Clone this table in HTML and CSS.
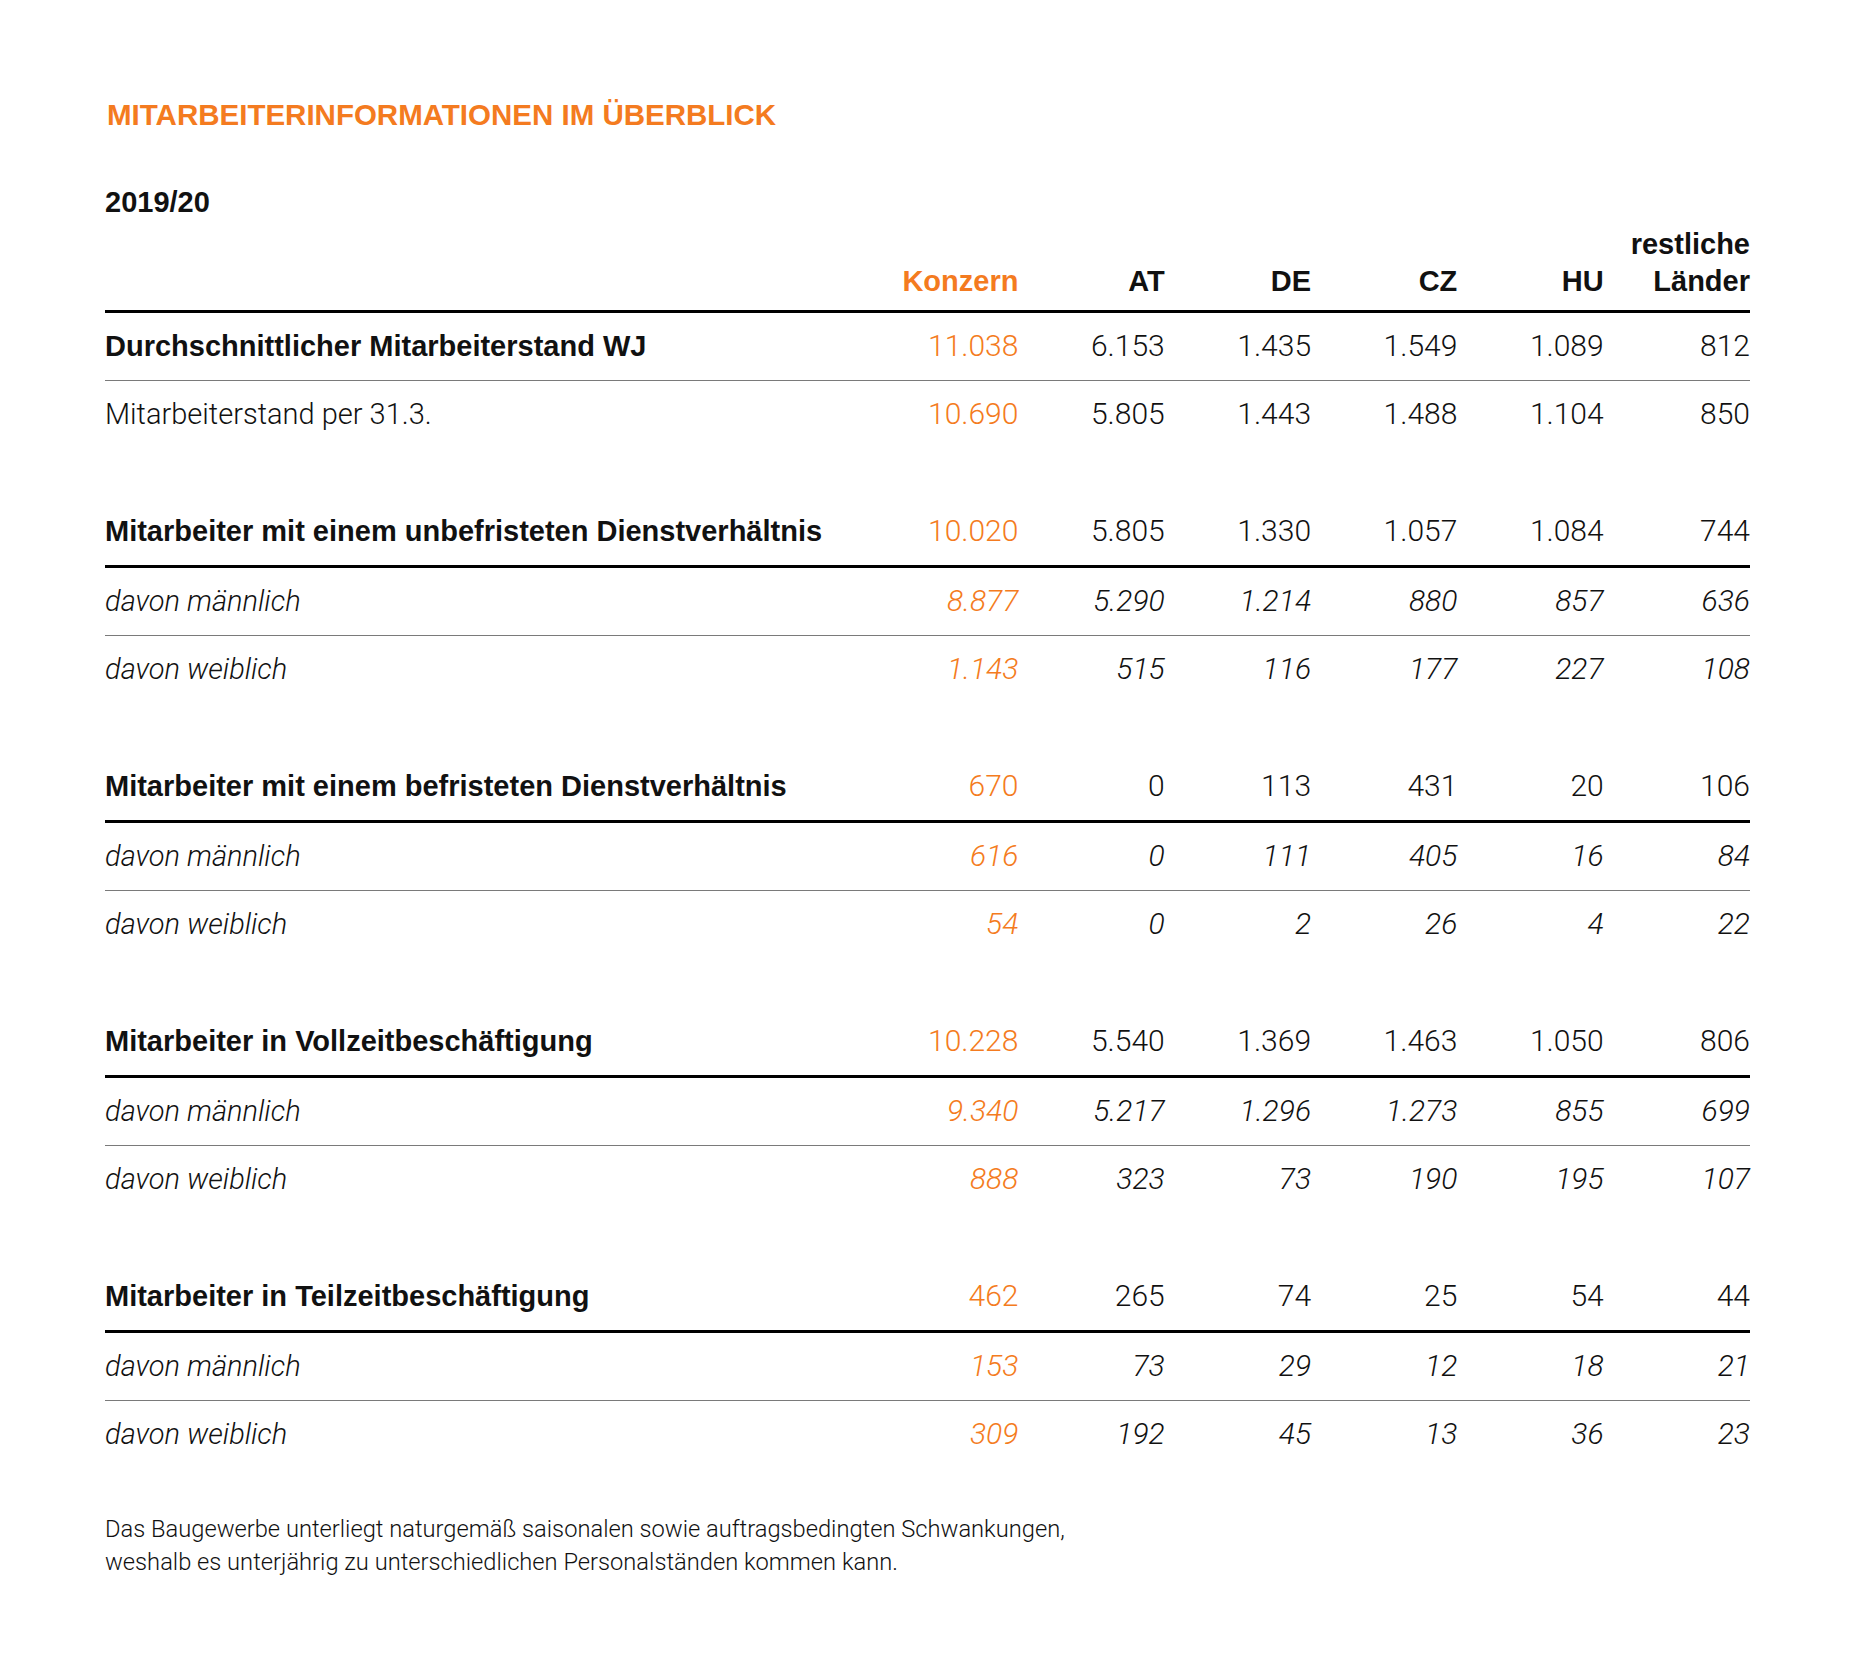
FILE: index.html
```html
<!DOCTYPE html>
<html lang="de">
<head>
<meta charset="utf-8">
<title>Mitarbeiterinformationen im Überblick</title>
<link rel="stylesheet" href="styles.css">
</head>
<body>
<main class="page">
  <h1 class="title">MITARBEITERINFORMATIONEN IM ÜBERBLICK</h1>
  <h2 class="year">2019/20</h2>
  <table class="data">
    <colgroup>
      <col class="c-label"><col class="c-num"><col class="c-num"><col class="c-num"><col class="c-num"><col class="c-num"><col class="c-num">
    </colgroup>
    <thead>
      <tr>
        <th class="label"></th>
        <th class="konzern">Konzern</th>
        <th>AT</th>
        <th>DE</th>
        <th>CZ</th>
        <th>HU</th>
        <th>restliche<br>Länder</th>
      </tr>
    </thead>
    <tbody>
      <tr class="main thin">
        <td class="label">Durchschnittlicher Mitarbeiterstand WJ</td>
        <td class="konzern">11.038</td><td>6.153</td><td>1.435</td><td>1.549</td><td>1.089</td><td>812</td>
      </tr>
      <tr class="plain">
        <td class="label">Mitarbeiterstand per 31.3.</td>
        <td class="konzern">10.690</td><td>5.805</td><td>1.443</td><td>1.488</td><td>1.104</td><td>850</td>
      </tr>
      <tr class="spacer"><td colspan="7"></td></tr>

      <tr class="main thick">
        <td class="label">Mitarbeiter mit einem unbefristeten Dienstverhältnis</td>
        <td class="konzern">10.020</td><td>5.805</td><td>1.330</td><td>1.057</td><td>1.084</td><td>744</td>
      </tr>
      <tr class="sub thin">
        <td class="label">davon männlich</td>
        <td class="konzern">8.877</td><td>5.290</td><td>1.214</td><td>880</td><td>857</td><td>636</td>
      </tr>
      <tr class="sub">
        <td class="label">davon weiblich</td>
        <td class="konzern">1.143</td><td>515</td><td>116</td><td>177</td><td>227</td><td>108</td>
      </tr>
      <tr class="spacer"><td colspan="7"></td></tr>

      <tr class="main thick">
        <td class="label">Mitarbeiter mit einem befristeten Dienstverhältnis</td>
        <td class="konzern">670</td><td>0</td><td>113</td><td>431</td><td>20</td><td>106</td>
      </tr>
      <tr class="sub thin">
        <td class="label">davon männlich</td>
        <td class="konzern">616</td><td>0</td><td>111</td><td>405</td><td>16</td><td>84</td>
      </tr>
      <tr class="sub">
        <td class="label">davon weiblich</td>
        <td class="konzern">54</td><td>0</td><td>2</td><td>26</td><td>4</td><td>22</td>
      </tr>
      <tr class="spacer"><td colspan="7"></td></tr>

      <tr class="main thick">
        <td class="label">Mitarbeiter in Vollzeitbeschäftigung</td>
        <td class="konzern">10.228</td><td>5.540</td><td>1.369</td><td>1.463</td><td>1.050</td><td>806</td>
      </tr>
      <tr class="sub thin">
        <td class="label">davon männlich</td>
        <td class="konzern">9.340</td><td>5.217</td><td>1.296</td><td>1.273</td><td>855</td><td>699</td>
      </tr>
      <tr class="sub">
        <td class="label">davon weiblich</td>
        <td class="konzern">888</td><td>323</td><td>73</td><td>190</td><td>195</td><td>107</td>
      </tr>
      <tr class="spacer"><td colspan="7"></td></tr>

      <tr class="main thick">
        <td class="label">Mitarbeiter in Teilzeitbeschäftigung</td>
        <td class="konzern">462</td><td>265</td><td>74</td><td>25</td><td>54</td><td>44</td>
      </tr>
      <tr class="sub thin">
        <td class="label">davon männlich</td>
        <td class="konzern">153</td><td>73</td><td>29</td><td>12</td><td>18</td><td>21</td>
      </tr>
      <tr class="sub">
        <td class="label">davon weiblich</td>
        <td class="konzern">309</td><td>192</td><td>45</td><td>13</td><td>36</td><td>23</td>
      </tr>
    </tbody>
  </table>
  <p class="note">Das Baugewerbe unterliegt naturgemäß saisonalen sowie auftragsbedingten Schwankungen,<br>weshalb es unterjährig zu unterschiedlichen Personalständen kommen kann.</p>
</main>
</body>
</html>
```

FILE: styles.css
```css
html, body {
  margin: 0;
  padding: 0;
  background: #ffffff;
}

body {
  font-family: Roboto, "Liberation Sans", Arial, sans-serif;
  color: #111111;
}

.page {
  width: 1645px;
  padding: 98px 0 80px 105px;
}

.title {
  margin: 0 0 0 2px;
  font-family: "Liberation Sans", Arial, sans-serif;
  font-size: 29.5px;
  line-height: 34px;
  font-weight: 700;
  color: #f47b20;
}

.year {
  margin: 53px 0 0 0;
  font-family: "Liberation Sans", Arial, sans-serif;
  font-size: 29px;
  line-height: 34px;
  font-weight: 700;
  color: #111111;
}

.data {
  width: 1645px;
  border-collapse: collapse;
  table-layout: fixed;
  margin-top: 7px;
}

.c-label { width: 767px; }
.c-num { width: 146.3px; }

.data th {
  font-family: "Liberation Sans", Arial, sans-serif;
  font-size: 29px;
  line-height: 37px;
  font-weight: 700;
  text-align: right;
  vertical-align: bottom;
  padding: 0 0 10px 0;
  border-bottom: 3px solid #000000;
  color: #111111;
}

.data th.konzern {
  color: #f47b20;
}

.data td {
  height: 65px;
  padding: 0 0 2px 0;
  font-size: 30px;
  line-height: 34px;
  font-weight: 300;
  text-align: right;
  vertical-align: middle;
  white-space: nowrap;
}

.data td.label {
  text-align: left;
  font-size: 29px;
}

.data td.konzern {
  color: #f47b20;
}

.data tr.main td.label {
  font-family: "Liberation Sans", Arial, sans-serif;
  font-weight: 700;
}

.data tr.sub td {
  font-style: italic;
}

.data tr.thin td {
  border-bottom: 1px solid #7a7a7a;
}

.data tr.thick td {
  border-bottom: 3px solid #000000;
}

.data tr.spacer td {
  height: 50px;
  padding: 0;
}

.note {
  margin: 45px 0 0 0;
  font-size: 23.7px;
  line-height: 33px;
  font-weight: 300;
  color: #111111;
}
```
